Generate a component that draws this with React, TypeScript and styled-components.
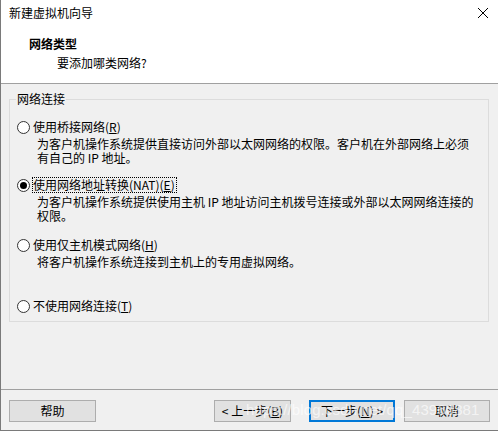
import React from "react";
import styled, { createGlobalStyle } from "styled-components";

const Global = createGlobalStyle`
  html, body { margin: 0; padding: 0; background: #f0f0f0; }
  body { font-family: "Microsoft YaHei UI", "Noto Sans CJK SC", "Noto Sans", sans-serif; font-size: 12px; color: #000; }
  * { box-sizing: border-box; }
`;

const Window = styled.div`
  position: relative;
  width: 498px;
  height: 431px;
  display: flex;
  flex-direction: column;
  border-left: 1px solid #7a7a7a;
  border-bottom: 1px solid #7a7a7a;
  background: #f0f0f0;
  overflow: hidden;
`;

const TitleBar = styled.div`
  height: 26px;
  background: #fff;
  display: flex;
  align-items: center;
  justify-content: space-between;
  padding: 0 9px 0 8px;
  line-height: 16px;
`;

const Title = styled.span`
  font-size: 12px;
`;

const CloseBtn = styled.span`
  display: flex;
  width: 12px;
  height: 12px;
  margin-right: 0;
`;

const Header = styled.div`
  height: 58px;
  background: #fff;
  border-bottom: 1px solid #a0a0a0;
  padding: 9px 0 0 28px;
  display: flex;
  flex-direction: column;
`;

const HeaderTitle = styled.div`
  font-weight: bold;
  font-size: 12px;
  line-height: 18px;
`;

const HeaderSub = styled.div`
  padding-left: 28px;
  line-height: 18px;
  margin-top: 1px;
`;

const Body = styled.div`
  flex: 1;
  padding: 7px 9px 0 8px;
`;

const Group = styled.fieldset`
  margin: 0;
  height: 231px;
  border: 1px solid #dcdcdc;
  padding: 12px 6px 0 7px;
`;

const Legend = styled.legend`
  padding: 0 1px;
  margin-left: -1px;
  line-height: 16px;
`;

const Options = styled.div`
  display: flex;
  flex-direction: column;
`;

const Option = styled.div<{ $top: number }>`
  margin-top: ${(p) => p.$top}px;
  display: flex;
  flex-direction: column;
`;

const OptionRow = styled.div`
  display: flex;
  align-items: center;
  height: 16px;
`;

const Radio = styled.span<{ $checked?: boolean }>`
  width: 13px;
  height: 13px;
  border-radius: 50%;
  border: 1px solid #333;
  background: #fff;
  display: flex;
  align-items: center;
  justify-content: center;
  margin-right: 3px;
  flex: none;
  &::after {
    content: "";
    display: ${(p) => (p.$checked ? "block" : "none")};
    width: 7px;
    height: 7px;
    border-radius: 50%;
    background: #000;
  }
`;

const Label = styled.span<{ $focus?: boolean }>`
  line-height: 14px;
  padding: 0 1px 0 0;
  outline: ${(p) => (p.$focus ? "1px dotted #000" : "none")};
  outline-offset: 0;
  white-space: nowrap;
`;

const Desc = styled.div`
  padding-left: 20px;
  line-height: 14px;
  margin-top: 2px;
  white-space: nowrap;
`;

const Footer = styled.div`
  border-top: 1px solid #a0a0a0;
  padding: 10px 8px 8px 8px;
  display: flex;
  align-items: center;
`;

const Spacer = styled.div`
  flex: 1;
`;

const Button = styled.button<{ $w: number; $default?: boolean }>`
  width: ${(p) => p.$w}px;
  height: 22px;
  background: #e1e1e1;
  border: ${(p) => (p.$default ? "2px solid #0078d7" : "1px solid #adadad")};
  font-family: inherit;
  font-size: 12px;
  color: #000;
  padding: 0;
  line-height: 16px;
  margin: 0;
`;

const ButtonGroup = styled.div`
  display: flex;
  align-items: center;
`;

const Gap = styled.span<{ $w: number }>`
  width: ${(p) => p.$w}px;
`;

const Watermark = styled.div`
  position: absolute;
  left: 245px;
  top: 401px;
  font-family: "Liberation Sans", Arial, sans-serif;
  font-size: 15px;
  color: rgba(255, 255, 255, 0.65);
  white-space: nowrap;
  pointer-events: none;
  letter-spacing: 0.1px;
`;

const CloseIcon = () => (
  <svg width="12" height="12" viewBox="0 0 12 12">
    <path d="M1 1 L11 11 M11 1 L1 11" stroke="#000" strokeWidth="1" fill="none" />
  </svg>
);

export default function App() {
  return (
    <>
      <Global />
      <Window>
        <TitleBar>
          <Title>新建虚拟机向导</Title>
          <CloseBtn>
            <CloseIcon />
          </CloseBtn>
        </TitleBar>
        <Header>
          <HeaderTitle>网络类型</HeaderTitle>
          <HeaderSub>要添加哪类网络?</HeaderSub>
        </Header>
        <Body>
          <Group>
            <Legend>网络连接</Legend>
            <Options>
              <Option $top={0}>
                <OptionRow>
                  <Radio />
                  <Label>
                    使用桥接网络(<u>R</u>)
                  </Label>
                </OptionRow>
                <Desc>
                  为客户机操作系统提供直接访问外部以太网网络的权限。客户机在外部网络上必须
                  <br />
                  有自己的 IP 地址。
                </Desc>
              </Option>
              <Option $top={12}>
                <OptionRow>
                  <Radio $checked />
                  <Label $focus>
                    使用网络地址转换(NAT)(<u>E</u>)
                  </Label>
                </OptionRow>
                <Desc>
                  为客户机操作系统提供使用主机 IP 地址访问主机拨号连接或外部以太网网络连接的
                  <br />
                  权限。
                </Desc>
              </Option>
              <Option $top={14}>
                <OptionRow>
                  <Radio />
                  <Label>
                    使用仅主机模式网络(<u>H</u>)
                  </Label>
                </OptionRow>
                <Desc>将客户机操作系统连接到主机上的专用虚拟网络。</Desc>
              </Option>
              <Option $top={29}>
                <OptionRow>
                  <Radio />
                  <Label>
                    不使用网络连接(<u>T</u>)
                  </Label>
                </OptionRow>
              </Option>
            </Options>
          </Group>
        </Body>
        <Footer>
          <Button $w={87}>帮助</Button>
          <Spacer />
          <ButtonGroup>
            <Button $w={77}>
              &lt; 上一步(<u>B</u>)
            </Button>
            <Gap $w={18} />
            <Button $w={86} $default>
              下一步(<u>N</u>) &gt;
            </Button>
            <Gap $w={9} />
            <Button $w={86}>取消</Button>
          </ButtonGroup>
        </Footer>
        <Watermark>https://blog.csdn.net/qq_43960881</Watermark>
      </Window>
    </>
  );
}
